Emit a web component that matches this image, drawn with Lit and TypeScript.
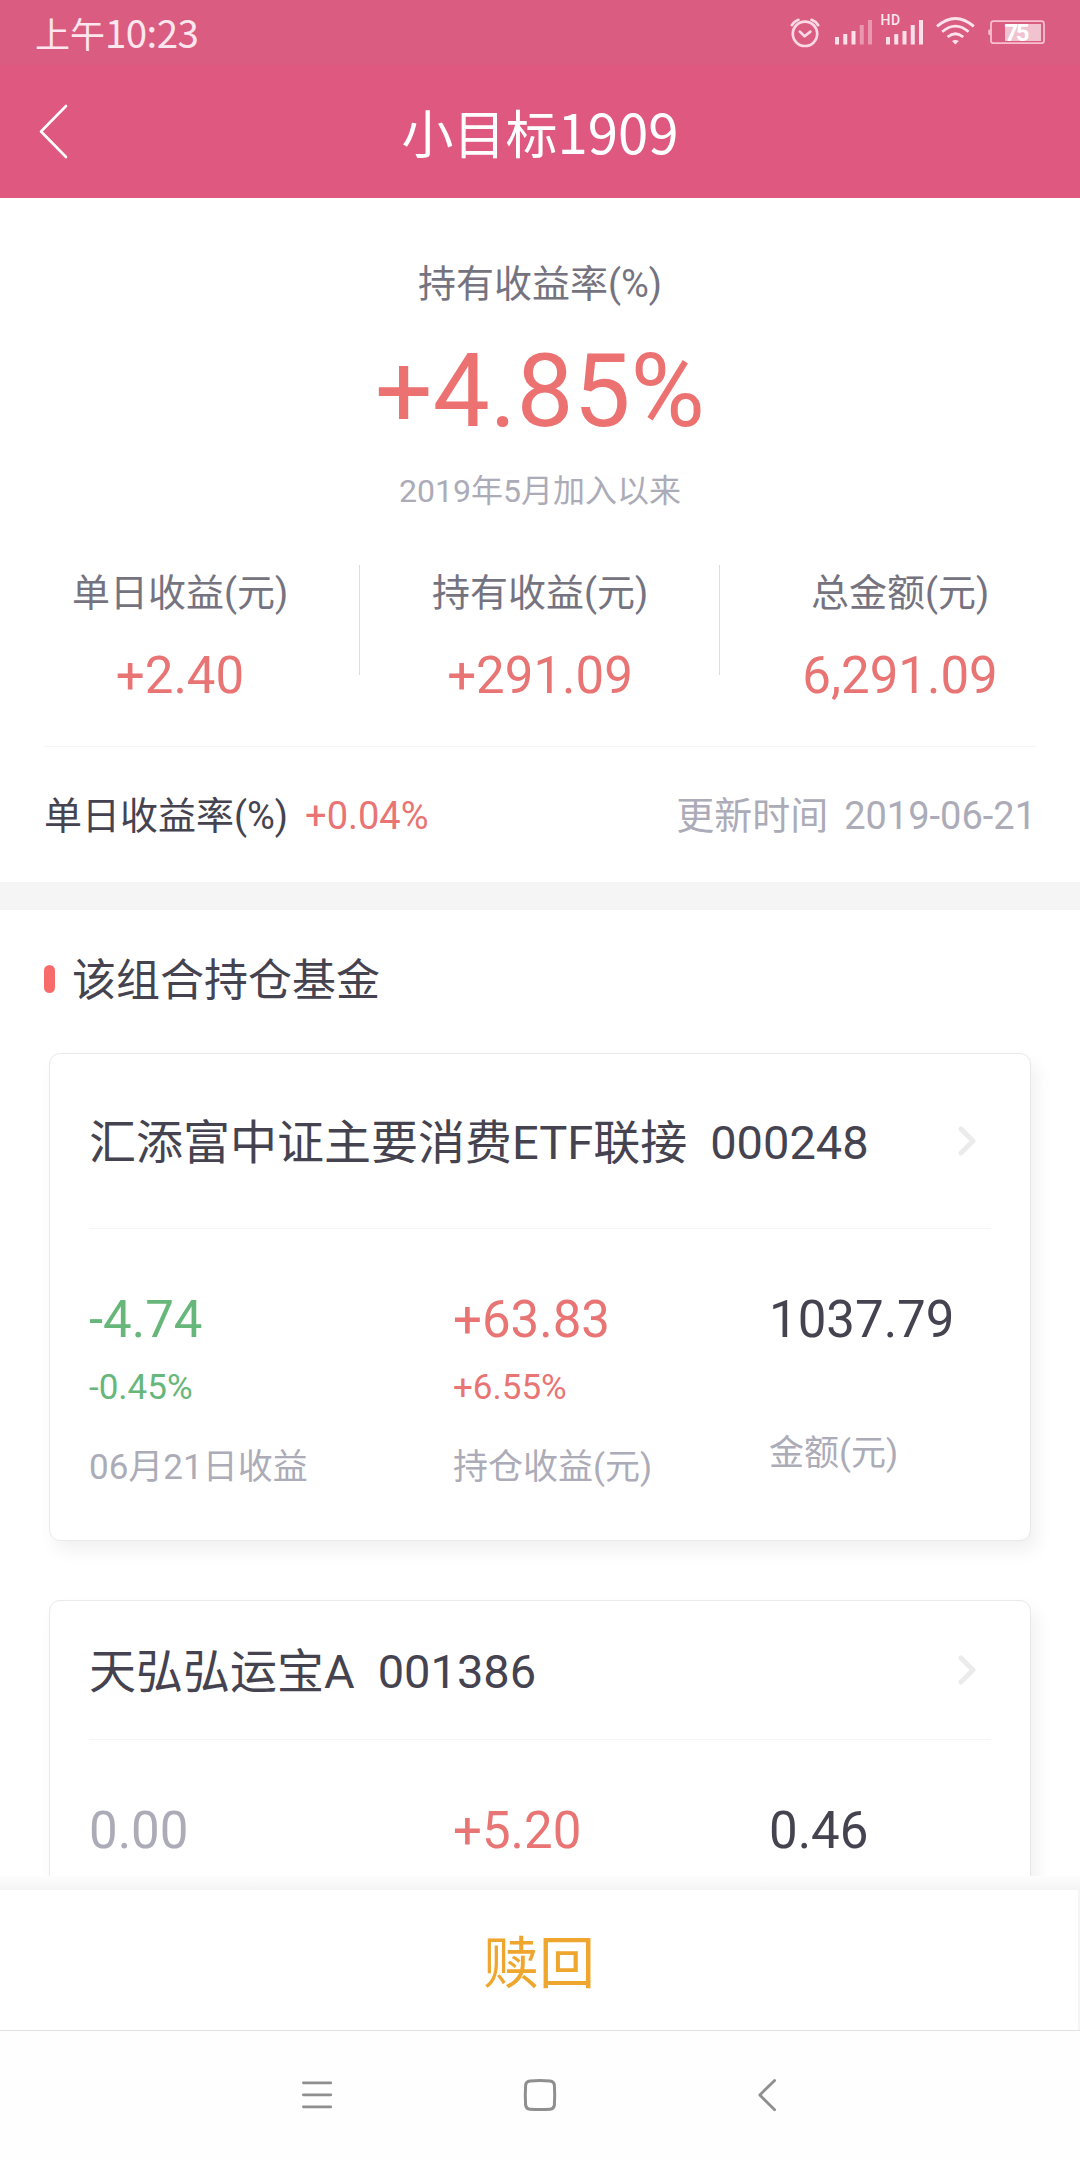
import { LitElement, html, css, svg } from "lit";
import { customElement, property } from "lit/decorators.js";
import { classMap } from "lit/directives/class-map.js";

type Tone = "up" | "down" | "flat" | "plain";

interface Figure {
  value: string;
  tone: Tone;
  percent?: string;
  label?: string;
}

interface Fund {
  name: string;
  code: string;
  compact: boolean;
  figures: Figure[];
}

const STATS = [
  { label: "单日收益(元)", value: "+2.40" },
  { label: "持有收益(元)", value: "+291.09" },
  { label: "总金额(元)", value: "6,291.09" },
];

const FUNDS: Fund[] = [
  {
    name: "汇添富中证主要消费ETF联接",
    code: "000248",
    compact: false,
    figures: [
      { value: "-4.74", tone: "down", percent: "-0.45%", label: "06月21日收益" },
      { value: "+63.83", tone: "up", percent: "+6.55%", label: "持仓收益(元)" },
      { value: "1037.79", tone: "plain", label: "金额(元)" },
    ],
  },
  {
    name: "天弘弘运宝A",
    code: "001386",
    compact: true,
    figures: [
      { value: "0.00", tone: "flat" },
      { value: "+5.20", tone: "up" },
      { value: "0.46", tone: "plain" },
    ],
  },
];

const BAR_TOPS = [19, 16, 13, 7, 2];

@customElement("status-bar")
class StatusBar extends LitElement {
  static styles = css`
    :host {
      display: flex;
      justify-content: space-between;
      height: 65px;
      background: #da5c80;
      color: #fde6ee;
    }
    .time {
      padding-left: 35px;
      font: 400 35px/44px "Noto Sans CJK SC", sans-serif;
      padding-top: 9px;
      white-space: nowrap;
    }
    .digits {
      font-size: 38.5px;
      letter-spacing: -0.6px;
    }
    .icons {
      display: block;
      width: 290px;
      height: 65px;
    }
    .hd {
      font: 500 14px Roboto, sans-serif;
      letter-spacing: 0.4px;
    }
    .level {
      font: 700 24px Roboto, sans-serif;
      letter-spacing: -2.4px;
    }
  `;

  private bars(x: number, lit: number) {
    return BAR_TOPS.map(
      (top, i) => svg`<rect x=${x + i * 8.25} y=${18 + top} width="4" height=${26.5 - top}
        fill="#fde0ea" opacity=${i < lit ? 1 : 0.45}></rect>`
    );
  }

  render() {
    return html`
      <div class="time">上午<span class="digits">10:23</span></div>
      <svg class="icons" viewBox="790 0 290 65" fill="none">
        <g stroke="#fdd9e5" stroke-width="2.7" stroke-linecap="round">
          <circle cx="805" cy="33.8" r="12.2"></circle>
          <path d="M799.8 31.6 L804.6 36.3 L810.4 31.6" stroke-linejoin="round"></path>
          <path d="M791.8 25.2 Q794 21.4 798.4 19.8 M818.2 25.2 Q816 21.4 811.6 19.8"></path>
        </g>
        ${this.bars(835, 3)} ${this.bars(886, 5)}
        <text class="hd" x="880.6" y="24.5" fill="#fde6ee">HD</text>
        <g stroke="#fde4ec" stroke-width="2.8" stroke-linecap="butt">
          <path d="M937 26.4 Q955.4 10.6 973.8 26.4"></path>
          <path d="M942.2 31.8 Q955.4 20.4 968.6 31.8"></path>
          <path d="M947.6 37 Q955.4 30.4 963.2 37"></path>
        </g>
        <path d="M952 41 Q955.4 38.8 958.8 41 L955.4 44.6 Z" fill="#fde4ec"></path>
        <rect x="991" y="21.2" width="53" height="22" rx="2.5" stroke="#f7bfd0" stroke-width="1.8"></rect>
        <rect x="988.3" y="29.5" width="2.2" height="5.5" rx="1" fill="#f7bfd0"></rect>
        <rect x="1005" y="24" width="36" height="17" fill="#f1c3d1"></rect>
        <text class="level" x="1004.5" y="41" fill="#ffffff">75</text>
      </svg>
    `;
  }
}

@customElement("title-bar")
class TitleBar extends LitElement {
  static styles = css`
    :host {
      display: grid;
      grid-template-columns: 120px 1fr 120px;
      height: 133px;
      background: #df587f;
      color: #fff;
    }
    .back {
      width: 32px;
      height: 56px;
      margin: 38px 0 0 38px;
    }
    .title {
      padding-top: 36px;
      text-align: center;
      font: 400 52px/60px "Noto Sans CJK SC", sans-serif;
      white-space: nowrap;
    }
    .digits {
      font-size: 54.5px;
    }
  `;

  render() {
    return html`
      <svg class="back" viewBox="0 0 32 56" fill="none" stroke="#fff" stroke-width="2.6"
        stroke-linecap="round" stroke-linejoin="round">
        <path d="M28 3 L3 28.5 L28 54"></path>
      </svg>
      <div class="title">小目标<span class="digits">1909</span></div>
    `;
  }
}

@customElement("summary-panel")
class SummaryPanel extends LitElement {
  static styles = css`
    :host {
      display: flex;
      flex-direction: column;
      background: #fff;
      padding-top: 64px;
      color: #757380;
      white-space: nowrap;
    }
    .caption {
      text-align: center;
      font-size: 38px;
      line-height: 44px;
    }
    .rate {
      margin-top: 31px;
      text-align: center;
      font-size: 101.5px;
      line-height: 110px;
      color: #ec7272;
    }
    .since {
      margin-top: 24px;
      text-align: center;
      font-size: 32px;
      line-height: 40px;
      color: #acabb8;
    }
    .stats {
      display: grid;
      grid-template-columns: repeat(3, 360px);
      margin-top: 54px;
      height: 141px;
      background: linear-gradient(#dcdcdc, #dcdcdc) 359px 0 / 1px 110px no-repeat,
        linear-gradient(#dcdcdc, #dcdcdc) 719px 0 / 1px 110px no-repeat;
    }
    .stat {
      display: flex;
      flex-direction: column;
      align-items: center;
      gap: 31px;
      padding-top: 6px;
      font-size: 38px;
      line-height: 44px;
    }
    .value {
      font-size: 51px;
      line-height: 60px;
      color: #e87474;
    }
    .daily {
      display: flex;
      align-items: center;
      margin: 40px 44px 0;
      padding: 47px 0 44px;
      border-top: 1px solid #f5f5f5;
      font-size: 38px;
      line-height: 44px;
      color: #454350;
    }
    .change {
      margin-left: 17px;
      color: #e87474;
    }
    .updated {
      display: flex;
      gap: 16px;
      margin-left: auto;
      color: #acabb8;
    }
  `;

  render() {
    return html`
      <div class="caption">持有收益率(%)</div>
      <div class="rate">+4.85%</div>
      <div class="since">2019年5月加入以来</div>
      <div class="stats">
        ${STATS.map(
          (s) => html`<div class="stat"><span>${s.label}</span><span class="value">${s.value}</span></div>`
        )}
      </div>
      <div class="daily">
        <span>单日收益率(%)</span>
        <span class="change">+0.04%</span>
        <span class="updated"><span>更新时间</span><span>2019-06-21</span></span>
      </div>
    `;
  }
}

@customElement("fund-card")
class FundCard extends LitElement {
  @property({ attribute: false }) fund!: Fund;

  static styles = css`
    :host {
      display: block;
    }
    .card {
      box-sizing: border-box;
      height: 488px;
      padding: 61px 39px 0 39px;
      border: 1px solid #e9e9e9;
      border-radius: 11px;
      background: #fff;
      box-shadow: 6px 10px 18px rgba(0, 0, 0, 0.06);
      white-space: nowrap;
    }
    .head {
      display: flex;
      align-items: center;
      padding-bottom: 57px;
      border-bottom: 1px solid #f5f5f5;
      font-size: 47px;
      line-height: 56px;
      color: #454350;
    }
    .compact {
      padding-top: 43px;
    }
    .compact .head {
      padding-bottom: 39px;
    }
    .code {
      margin-left: 23px;
    }
    .go {
      width: 20px;
      height: 32px;
      margin: 0 14px 4px auto;
    }
    .figures {
      display: grid;
      grid-template-columns: 364px 316px 1fr;
      padding-top: 61px;
    }
    .figure {
      display: flex;
      flex-direction: column;
    }
    .value {
      font-size: 51px;
      line-height: 60px;
    }
    .percent {
      margin-top: 17px;
      font-size: 35px;
      line-height: 42px;
    }
    .label {
      margin-top: 83px;
      font-size: 35px;
      line-height: 42px;
      color: #acabb8;
    }
    .percent + .label {
      margin-top: 38px;
    }
    .up {
      color: #e87474;
    }
    .down {
      color: #67b77b;
    }
    .flat {
      color: #acabb8;
    }
    .plain {
      color: #454350;
    }
  `;

  render() {
    const { name, code, compact, figures } = this.fund;
    return html`
      <div class=${classMap({ card: true, compact })}>
        <div class="head">
          <span>${name}</span>
          <span class="code">${code}</span>
          <svg class="go" viewBox="0 0 20 32" fill="none" stroke="#ebebeb" stroke-width="5"
            stroke-linecap="round" stroke-linejoin="round">
            <path d="M4 4 L16 16 L4 28"></path>
          </svg>
        </div>
        <div class="figures">
          ${figures.map(
            (f) => html`<div class="figure ${f.tone}">
              <span class="value">${f.value}</span>
              ${f.percent ? html`<span class="percent">${f.percent}</span>` : ""}
              ${f.label ? html`<span class="label">${f.label}</span>` : ""}
            </div>`
          )}
        </div>
      </div>
    `;
  }
}

@customElement("nav-bar")
class NavBar extends LitElement {
  static styles = css`
    :host {
      display: flex;
      justify-content: space-between;
      box-sizing: border-box;
      height: 130px;
      padding: 42px 295px 0;
      border-top: 1px solid #e2e2e2;
      background: #fefefe;
    }
    .key {
      width: 44px;
      height: 44px;
    }
  `;

  render() {
    return html`
      <svg class="key" viewBox="295 2073 44 44" fill="none" stroke="#8f8f8f" stroke-width="2.8" stroke-linecap="round">
        <path d="M303.4 2082.8 H330.8 M303.4 2094.8 H330.8 M303.4 2106.8 H330.8"></path>
      </svg>
      <svg class="key" viewBox="518 2073 44 44" fill="none" stroke="#8f8f8f" stroke-width="3">
        <path d="M530 2080.9 Q540 2080 550 2080.9 Q554 2081.4 554.4 2085 Q555 2095 554.4 2105
          Q554 2108.8 550 2109.2 Q540 2110 530 2109.2 Q526 2108.8 525.6 2105 Q525 2095 525.6 2085
          Q526 2081.4 530 2080.9 Z"></path>
      </svg>
      <svg class="key" viewBox="741 2073 44 44" fill="none" stroke="#8f8f8f" stroke-width="2.8"
        stroke-linecap="round" stroke-linejoin="round">
        <path d="M774.6 2080.4 L759.8 2095 L774.6 2109.8"></path>
      </svg>
    `;
  }
}

@customElement("app-root")
class AppRoot extends LitElement {
  static styles = css`
    :host {
      display: flex;
      flex-direction: column;
      width: 1080px;
      height: 2160px;
      overflow: hidden;
      background: #fff;
      font-family: Roboto, "Noto Sans CJK SC", sans-serif;
      font-weight: 400;
    }
    .scroll {
      flex: 1;
      min-height: 0;
      overflow: hidden;
    }
    .band {
      height: 28px;
      background: #f5f5f5;
    }
    .section {
      display: flex;
      align-items: center;
      gap: 17px;
      padding: 46px 44px 47px;
      font-size: 44px;
      line-height: 50px;
      color: #454350;
    }
    .pill {
      width: 11px;
      height: 28px;
      margin-bottom: 4px;
      border-radius: 5.5px;
      background: #f76b6b;
    }
    .cards {
      display: flex;
      flex-direction: column;
      gap: 59px;
      padding: 0 49px;
    }
    .fade {
      height: 14px;
      background: linear-gradient(#fdfdfd, #f4f4f4);
    }
    .redeem {
      box-sizing: border-box;
      height: 140px;
      padding-top: 34px;
      border-right: 2px solid #f5f5f5;
      text-align: center;
      font: 400 56px/70px "Noto Sans CJK SC", sans-serif;
      color: #efa62f;
    }
  `;

  render() {
    return html`
      <status-bar></status-bar>
      <title-bar></title-bar>
      <div class="scroll">
        <summary-panel></summary-panel>
        <div class="band"></div>
        <div class="section"><span class="pill"></span><span>该组合持仓基金</span></div>
        <div class="cards">${FUNDS.map((f) => html`<fund-card .fund=${f}></fund-card>`)}</div>
      </div>
      <div class="fade"></div>
      <div class="redeem">赎回</div>
      <nav-bar></nav-bar>
    `;
  }
}
